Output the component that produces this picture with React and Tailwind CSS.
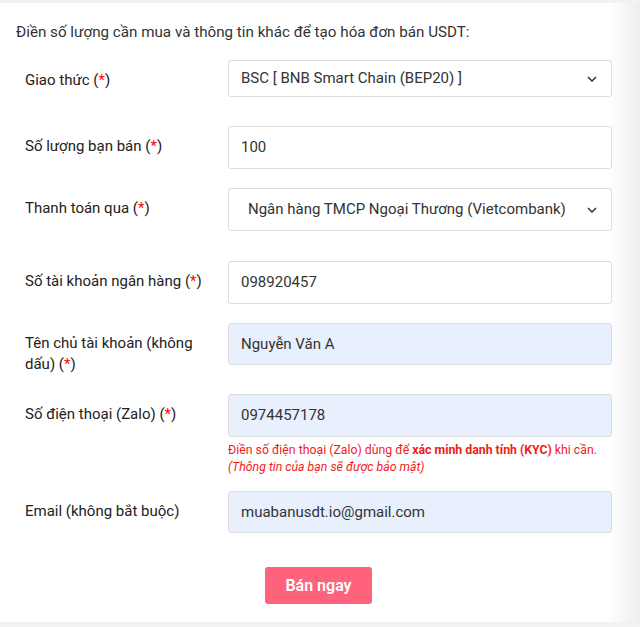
import React from 'react';

const Req = () => (
  <span>
    (<span className="text-[#ff0000]">*</span>)
  </span>
);

const Chevron = () => (
  <svg width="10" height="6" viewBox="0 0 10 6" className="absolute right-[14px] top-1/2 -translate-y-1/2">
    <path d="M1 1l4 4 4-4" fill="none" stroke="#333" strokeWidth="1.5" />
  </svg>
);

const Row = ({ label, className = '', children }) => (
  <div className={`flex items-start ${className}`}>
    <div className="w-[228px] shrink-0 pl-[25px] pr-[16px] pt-[10px] leading-[21px] text-[15px] text-[#222]">
      {label}
    </div>
    <div className="w-[384px] shrink-0">{children}</div>
  </div>
);

const boxBase = 'w-full rounded-[3px] border border-[#dedede] text-[15px] text-[#333] flex items-center';

export default function App() {
  return (
    <div
      className="h-[627px] w-[640px] border-t-[3px] border-b-[5px] border-[#f2f2f2] bg-[linear-gradient(to_right,#ffffff_95%,#eeeeee)] pt-[18px]"
      style={{ fontFamily: 'Roboto, "Noto Sans", sans-serif' }}
    >
      <div className="pl-[16px] text-[15.2px] leading-[22px] text-[#333]">
        Điền số lượng cần mua và thông tin khác để tạo hóa đơn bán USDT:
      </div>

      <Row label={<>Giao thức <Req /></>} className="mt-[17px]">
        <div className={`${boxBase} relative h-[37px] bg-white pl-[12px]`}>
          BSC [ BNB Smart Chain (BEP20) ]
          <Chevron />
        </div>
      </Row>

      <Row label={<>Số lượng bạn bán <Req /></>} className="mt-[29px]">
        <div className={`${boxBase} h-[43px] bg-white pl-[12px]`}>100</div>
      </Row>

      <Row label={<>Thanh toán qua <Req /></>} className="mt-[19px]">
        <div className={`${boxBase} relative h-[43px] bg-white pl-[19px]`}>
          Ngân hàng TMCP Ngoại Thương (Vietcombank)
          <Chevron />
        </div>
      </Row>

      <Row label={<>Số tài khoản ngân hàng <Req /></>} className="mt-[30px]">
        <div className={`${boxBase} h-[43px] bg-white pl-[12px]`}>098920457</div>
      </Row>

      <Row label={<>Tên chủ tài khoản (không dấu) <Req /></>} className="mt-[19px]">
        <div className={`${boxBase} h-[42px] bg-[#e8f0fe] pl-[12px]`}>Nguyễn Văn A</div>
      </Row>

      <Row label={<>Số điện thoại (Zalo) <Req /></>} className="mt-[19px]">
        <div className={`${boxBase} h-[43px] bg-[#e8f0fe] pl-[12px]`}>0974457178</div>
        <div className="mt-[5px] text-[12.3px] leading-[17px] text-[#f01c1c]">
          <div>
            Điền số điện thoại (Zalo) dùng để <b>xác minh danh tính (KYC)</b> khi cần.
          </div>
          <div className="italic">(Thông tin của bạn sẽ được bảo mật)</div>
        </div>
      </Row>

      <Row label="Email (không bắt buộc)" className="mt-[15px]">
        <div className={`${boxBase} h-[42px] bg-[#e8f0fe] pl-[12px]`}>muabanusdt.io@gmail.com</div>
      </Row>

      <div className="mt-[34px] pl-[265px]">
        <button className="h-[37px] w-[107px] rounded-[3px] bg-[#ff637b] text-[16px] font-semibold text-white">
          Bán ngay
        </button>
      </div>
    </div>
  );
}
